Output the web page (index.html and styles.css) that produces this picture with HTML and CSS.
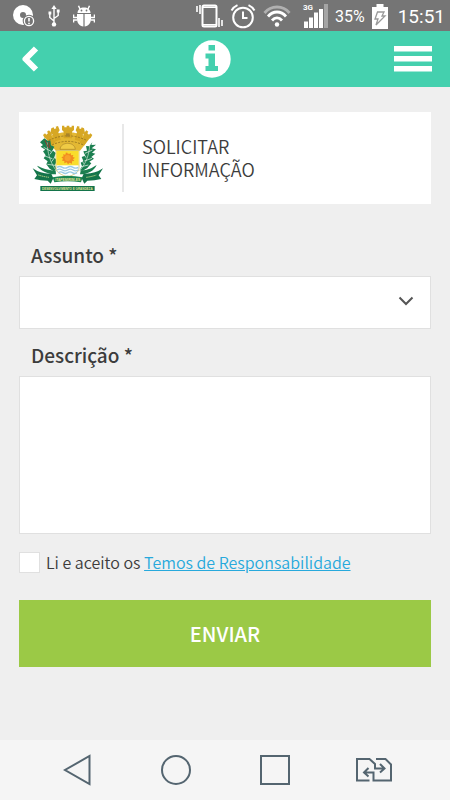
FILE: index.html
```html
<!DOCTYPE html>
<html lang="pt-BR">
<head>
    <meta charset="UTF-8">
    <meta name="viewport" content="width=device-width, initial-scale=1.0">
    <title>Solicitar Informação</title>
    <link rel="stylesheet" href="styles.css">
</head>
<body>
    <div class="status-bar">
        <div class="status-group status-left">
            <svg width="22" height="22" viewBox="0 0 22 22">
                <circle cx="10" cy="10" r="6.5" fill="none" stroke="#fff" stroke-width="7"/>
                <circle cx="16" cy="16" r="6.3" fill="#757575"/>
                <circle cx="16" cy="16" r="4.6" fill="none" stroke="#fff" stroke-width="1.3"/>
                <path d="M16 13v3.6M16 17.8v1.4" stroke="#fff" stroke-width="1.6"/>
            </svg>
            <svg width="12" height="22" viewBox="0 0 12 22" fill="none" stroke="#fff" stroke-width="1.4">
                <path d="M6 3v16M6 16L1.8 12.5V8M6 13.5l4.2-3V6"/>
                <path d="M6 0l2.6 4H3.4z" fill="#fff" stroke="none"/>
                <circle cx="6" cy="19.4" r="2.2" fill="#fff" stroke="none"/>
                <path d="M.5 6.5h2.8v3H.5zM8.8 4.5h2.8v3H8.8z" fill="#fff" stroke="none"/>
            </svg>
            <svg width="22" height="22" viewBox="0 0 22 22" fill="#fff">
                <path d="M4.5 8C4.5 4.5 7.5 2.5 11 2.5s6.500 2 6.500 5.500z"/>
                <path d="M7 4L5.500 .8M15 4L16.500 .8" stroke="#fff" stroke-width="1.500"/>
                <path d="M4 9h6.400v12.500C6.500 21 4 18 4 14zM18 9h-6.400v12.500C15.500 21 18 18 18 14z"/>
                <path d="M.5 9.500v3H4M.5 17.500V15H4M21.500 9.500v3H18M21.500 17.500V15H18" fill="none" stroke="#fff" stroke-width="1.600"/>
                <circle cx="8.500" cy="5.500" r=".9" fill="#757575"/>
                <circle cx="13.500" cy="5.500" r=".9" fill="#757575"/>
            </svg>
        </div>
        <div class="status-group">
            <svg width="27" height="24" viewBox="0 0 27 24" fill="none" stroke="#fff">
                <rect x="6.500" y="1.500" width="14" height="21" rx="1.500" stroke-width="2"/>
                <path d="M6 3.200h15M6 20.800h15" stroke-width="1.500"/>
                <path d="M1 2v6M4 1v9M23 14v9M26 16v6" stroke-width="1.600"/>
            </svg>
            <svg width="26" height="25" viewBox="0 0 26 25" fill="none" stroke="#fff" stroke-width="2">
                <circle cx="13" cy="13.500" r="9.800"/>
                <path d="M13 7.500V14h4.500M1.500 6.500C3 4 5 2.300 7.500 1.200M24.500 6.500C23 4 21 2.300 18.500 1.200"/>
            </svg>
            <svg width="28" height="22" viewBox="0 0 28 22" fill="none" stroke="#fff" stroke-width="2.800">
                <path d="M1.500 8C8 0 20 0 26.500 8" stroke="#b0b0b0"/>
                <path d="M5 11.500c5-6 13-6 18 0M9 15.500c3-3.500 7-3.500 10 0"/>
                <circle cx="14" cy="19.500" r="2.200" fill="#fff" stroke="none"/>
            </svg>
            <div class="signal">
                <span class="network">3G</span>
                <svg width="25" height="24" viewBox="0 0 25 24" fill="#fff">
                    <path d="M1 17.500h4V24H1zM6 13.500h4V24H6zM11 8.500h4V24h-4zM16 5h4v19h-4z"/>
                    <path d="M21 0h4v24h-4z" fill="#a5a5a5"/>
                </svg>
            </div>
            <span class="battery-level">35%</span>
            <svg class="battery" width="16" height="25" viewBox="0 0 16 25">
                <path d="M4.500 0h7v3H16v22H0V3h4.500z" fill="#fff"/>
                <path d="M5.500 8h6.500l-2 4h3l-9 9 2-6H3z" fill="#fff" stroke="#999" stroke-width="1.300"/>
            </svg>
            <time class="clock">15:51</time>
        </div>
    </div>

    <header class="app-header">
        <button class="icon-button" type="button" aria-label="Voltar">
            <svg width="18" height="26" viewBox="0 0 18 26" fill="none" stroke="#fff" stroke-width="6" stroke-linejoin="round">
                <path d="M15 2.500L4.500 13 15 23.500"/>
            </svg>
        </button>
        <svg class="info-icon" width="38" height="38" viewBox="0 0 38 38">
            <circle cx="19" cy="19" r="18.700" fill="#fff"/>
            <path d="M15.500 5h6.500v5.500h-6.500zM12.500 13.500H22V26h3v5H12.500v-5h3v-7.500h-3z" fill="#44d0ae"/>
        </svg>
        <button class="icon-button menu-button" type="button" aria-label="Menu">
            <svg width="38" height="26" viewBox="0 0 38 26" fill="#fff">
                <path d="M0 0h38v5.500H0zM0 10h38v5.500H0zM0 20h38v5.500H0z"/>
            </svg>
        </button>
    </header>

    <main class="content">
        <section class="title-card">
            <div class="crest-box">
                <svg class="crest" width="72" height="68" viewBox="66 54 216 204">
                    <!-- coroa -->
                    <path d="M106 96q67-34 134 0l-30 38h-73z" fill="#e3b833"/>
                    <g fill="#d6a724">
                        <path d="M156 59h7v5h7v-5h8v5h7v-5h7v13l-6 5v20h-25V77l-5-5z"/>
                        <path d="M124 67l7-3 2 5 6-2-2-5 7-2 5 13-4 6 7 22-16 5-9-21-6-4z"/>
                        <path d="M222 67l-7-3-2 5-6-2 2-5-7-2-5 13 4 6-7 22 16 5 9-21 6-4z"/>
                        <path d="M99 87l6-5 4 4 5-4-3-5 6-4 9 11-2 6 14 19-14 10-14-21-6-2z"/>
                        <path d="M247 87l-6-5-4 4-5-4 3-5-6-4-9 11 2 6-14 19 14 10 14-21 6-2z"/>
                    </g>
                    <path d="M116 103q57-27 114 0M126 117q47-22 94 0" fill="none" stroke="#9c7a22" stroke-width="3" stroke-dasharray="6 4"/>
                    <path d="M168 82h11v10h-11z" fill="#a8842a"/>
                    <path d="M150 130c2-24 44-24 46 0z" fill="#f0cb45" stroke="#a8842a" stroke-width="2"/>
                    <!-- ramos -->
                    <g fill="#1b7f50">
                        <path d="M103 97l11 8 7-2 2 15 10 4-5 11 9 8-4 13 8 10-6 13 4 15-8 4-12-8-10-13 4-9-12-9 6-9-8-12 7-5-14-9 7-5-9-8z"/>
                        <path d="M247 109l-9 12-10-1 3 14-11 2 5 13-10 4 5 12-8 5 4 11-7 12 8 2 15-9 12-14-6-5 14-9-8-5 12-10-10-3 12-10-13-3 13-11-14 1z"/>
                        <path d="M137 194c-26-2-40-8-56-15 10 14 33 27 57 26zM212 194c24-2 34-8 48-17-7 17-26 28-50 28z"/>
                    </g>
                    <path d="M111 109c2 30 8 60 29 86M239 118c-2 28-10 54-31 77" fill="none" stroke="#d5e8d6" stroke-width="2"/>
                    <path d="M101 124l22 12M129 132l-9 13M104 150l23 8M135 153l-10 14M112 175l23 3M247 132l-22 10M220 141l8 14M246 157l-23 8M215 160l6 13M235 177l-21 5" stroke="#f4faf3" stroke-width="2"/>
                    <path d="M105 103l10 22M116 108l4 19" stroke="#8e3b2d" stroke-width="3"/>
                    <!-- escudo -->
                    <path d="M138 134h69v51c0 17-17 20-34 29-18-9-35-12-35-29z" fill="#fff" stroke="#c4b34a" stroke-width="2"/>
                    <path d="M139 135h67v43h-67z" fill="#f9dd2c"/>
                    <path d="M173 139l3 6 6-4 1 7 7-1-2 6 7 2-6 5 4 5-7 1v7l-7-3-5 5-4-6-7 3v-7l-7-1 3-6-5-4 7-3-2-6 7 1 2-7 5 4z" fill="#f28c20"/>
                    <circle cx="173" cy="156" r="9" fill="#f7a22b"/>
                    <path d="M141 184q8-5 16 0t16 0 16 0 16 0M141 192q8-5 16 0t16 0 16 0 16 0M145 200q7-5 14 0t14 0 14 0 14 0" fill="none" stroke="#9ccbe4" stroke-width="4"/>
                    <!-- faixas -->
                    <path d="M68 187q26 18 56 16l6 14-8 16-9-9q-22 0-40-5l8-11zM279 187q-26 18-58 16l-6 14 8 16 9-9q22 0 42-5l-8-11z" fill="#14744a"/>
                    <path d="M128 214q45-9 90 0l-5 15q-40-7-80 0z" fill="#1b8551"/>
                    <path d="M85 207q15 5 32 7M229 214q16-2 30-7" fill="none" stroke="#c8dc8c" stroke-width="3" stroke-dasharray="4 2"/>
                    <path d="M91 240h163v15H91z" fill="#14744a"/>
                    <text class="crest-name" x="173" y="225" text-anchor="middle">ITAPEMIRIM-ES</text>
                    <text class="crest-motto" x="172" y="251" text-anchor="middle">DESENVOLVIMENTO E GRANDEZA</text>
                </svg>
            </div>
            <h1 class="page-title">SOLICITAR<br>INFORMAÇÃO</h1>
        </section>

        <form class="request-form">
            <label class="field-label" for="assunto">Assunto *</label>
            <div class="select-box">
                <select class="field select" id="assunto" name="assunto" required>
                    <option value=""></option>
                </select>
                <svg class="chevron" width="16" height="10" viewBox="0 0 16 10" fill="none" stroke="#555" stroke-width="2">
                    <path d="M1.500 1.500L8 8l6.500-6.500"/>
                </svg>
            </div>

            <label class="field-label" for="descricao">Descrição *</label>
            <textarea class="field textarea" id="descricao" name="descricao" required></textarea>

            <div class="terms">
                <input class="checkbox" type="checkbox" id="aceite" name="aceite" required>
                <label for="aceite">Li e aceito os <a class="terms-link" href="#termos">Temos de Responsabilidade</a></label>
            </div>

            <button class="submit" type="submit">ENVIAR</button>
        </form>
    </main>

    <nav class="system-nav">
        <button class="nav-button" type="button" aria-label="Voltar">
            <svg width="28" height="32" viewBox="0 0 28 32"><path d="M26.500 2v28L2 16z"/></svg>
        </button>
        <button class="nav-button" type="button" aria-label="Início">
            <svg width="32" height="32" viewBox="0 0 32 32"><circle cx="16" cy="16" r="14"/></svg>
        </button>
        <button class="nav-button" type="button" aria-label="Recentes">
            <svg width="32" height="32" viewBox="0 0 32 32"><path d="M2 2h28v28H2z"/></svg>
        </button>
        <button class="nav-button" type="button" aria-label="Trocar SIM">
            <svg width="38" height="26" viewBox="0 0 38 26">
                <path d="M14.500 23.500H2V2h12.500l5.500 5v4.500h9M21 2h9.500l5.500 5.500v16H18.500v-8H10M25 7l4.500 4.500L25 15.500M13.500 11L9 15.500l4.500 4"/>
            </svg>
        </button>
    </nav>
</body>
</html>
```

FILE: styles.css
```css
* {
    box-sizing: border-box;
}
body {
    margin: 0;
    min-height: 100vh;
    display: flex;
    flex-direction: column;
    background-color: #efefef;
    color: #3c3c3c;
    font-family: "Noto Sans CJK SC", "Open Sans", sans-serif;
}
button {
    padding: 0;
    border: none;
    background: none;
    cursor: pointer;
}
svg {
    display: block;
    flex-shrink: 0;
}

/* Barra de status */
.status-bar {
    display: flex;
    justify-content: space-between;
    align-items: center;
    height: 31px;
    padding: 1px 5px 0 13px;
    background-color: #757575;
    color: #fff;
    font-family: Roboto, sans-serif;
}
.status-group {
    display: flex;
    align-items: center;
    gap: 7px;
}
.status-left {
    gap: 13px;
}
.signal {
    position: relative;
    margin-left: 5px;
}
.network {
    position: absolute;
    top: 0;
    left: 0;
    font-size: 8px;
    line-height: 8px;
    font-weight: bold;
}
.battery-level {
    font-size: 16px;
}
.clock {
    margin-left: 3px;
    font-size: 19px;
}

/* Cabeçalho */
.app-header {
    display: flex;
    justify-content: space-between;
    align-items: center;
    height: 56px;
    padding: 0 18px 0 21px;
    background-color: #44d0ae;
}
.menu-button {
    padding-left: 10px;
}

/* Conteúdo */
.content {
    flex: 1;
    padding: 25px 19px;
}
.title-card {
    display: flex;
    align-items: center;
    padding: 12px 13px;
    background-color: #fff;
}
.crest-box {
    padding-right: 18px;
    border-right: 2px solid #e8e8e8;
}
.crest-name,
.crest-motto {
    fill: #e3e69a;
    font-family: "Liberation Sans", sans-serif;
    font-weight: bold;
}
.crest-name {
    font-size: 10px;
}
.crest-motto {
    font-size: 9px;
}
.page-title {
    margin: 0 0 0 18px;
    font-size: 18px;
    line-height: 23px;
    font-weight: 350;
}
.request-form {
    display: flex;
    flex-direction: column;
    margin-top: 36px;
}
.field-label {
    padding: 0 12px;
    margin-bottom: 6px;
    font-size: 19px;
    line-height: 30px;
    font-weight: 500;
}
.field {
    display: block;
    width: 100%;
    border: 1px solid #e0e0e0;
    border-radius: 0;
    background-color: #fff;
    color: #3c3c3c;
    font: inherit;
    font-size: 18px;
    outline: none;
}
.select-box {
    position: relative;
    margin-bottom: 11px;
}
.select {
    height: 53px;
    padding: 0 40px 0 12px;
    appearance: none;
}
.chevron {
    position: absolute;
    top: 20px;
    right: 17px;
    pointer-events: none;
}
.textarea {
    height: 158px;
    padding: 12px;
    resize: none;
}
.terms {
    display: flex;
    align-items: center;
    gap: 6px;
    margin-top: 18px;
    font-size: 16px;
    line-height: 21px;
    font-weight: 350;
}
.checkbox {
    width: 21px;
    height: 21px;
    margin: 0;
    border: 1px solid #e0e0e0;
    background-color: #fff;
    appearance: none;
}
.checkbox:checked {
    background-color: #9bc946;
}
.terms-link {
    color: #27a9dc;
}
.submit {
    height: 67px;
    margin-top: 27px;
    background-color: #9bc946;
    color: #fff;
    font-family: inherit;
    font-size: 20px;
    font-weight: 500;
}

/* Navegação do sistema */
.system-nav {
    display: flex;
    height: 60px;
    padding: 0 27px;
    background-color: #f5f5f5;
}
.nav-button {
    flex: 1;
    display: flex;
    justify-content: center;
    align-items: center;
}
.nav-button svg {
    fill: none;
    stroke: #546570;
    stroke-width: 2;
}
```
